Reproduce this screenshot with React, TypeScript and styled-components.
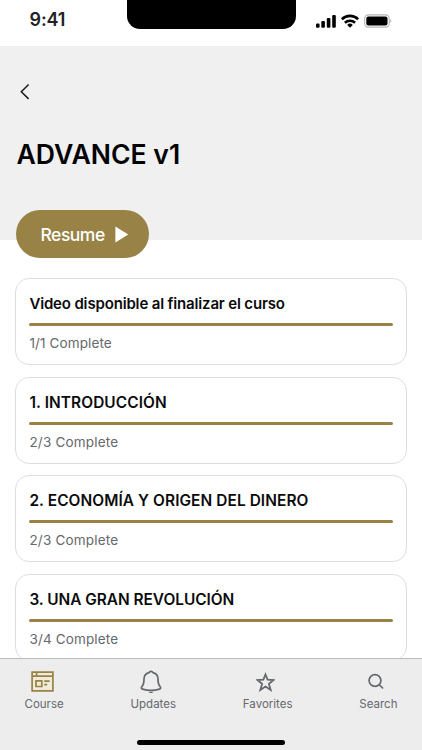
import React from "react";
import styled, { createGlobalStyle } from "styled-components";

const GOLD = "#988246";
const INK = "#0b0b0d";
const GREY = "#65686d";

const GlobalStyle = createGlobalStyle`
  *, *::before, *::after { box-sizing: border-box; }
  html, body { margin: 0; height: 100%; overflow: hidden; background: #fff; }
  #root { height: 100%; }
  button { border: 0; margin: 0; padding: 0; background: none; font: inherit; color: inherit; }
  svg { display: block; flex: none; }
`;

const Screen = styled.div`
  display: flex;
  flex-direction: column;
  width: 422px;
  height: 750px;
  overflow: hidden;
  background: #fff;
  color: ${INK};
  font-family: Inter, "Liberation Sans", sans-serif;
`;

const StatusBar = styled.div`
  flex: none;
  display: grid;
  grid-template-columns: 126.5px 169px 126.5px;
  align-items: start;
  height: 45.5px;
`;

const Clock = styled.span`
  padding: 9px 0 0 29.5px;
  font-size: 18px;
  line-height: 22px;
  font-weight: 600;
  letter-spacing: -0.1px;
  color: #222226;
`;

const Notch = styled.div`
  height: 29px;
  border-radius: 0 0 13px 13px;
  background: #000;
`;

const StatusIcons = styled.div`
  display: flex;
  align-items: center;
  padding: 13.5px 0 0 20.5px;
  gap: 5px;
`;

const Hero = styled.header`
  flex: none;
  display: flex;
  flex-direction: column;
  align-items: flex-start;
  height: 194px;
  padding: 37.5px 16px 0;
  background: #f0f0f0;
`;

const BackButton = styled.button`
  padding-left: 4px;
`;

const CourseTitle = styled.h1`
  margin: 38px 0 0 0.5px;
  font-size: 26.6px;
  line-height: 32px;
  font-weight: 600;
  color: #030304;
`;

const ResumeButton = styled.button`
  flex: none;
  display: flex;
  align-items: center;
  gap: 10.4px;
  width: 133px;
  height: 48px;
  margin-top: 40px;
  padding-left: 24.5px;
  border-radius: 24px;
  background: ${GOLD};
  color: #fff;
  font-size: 17.5px;
  font-weight: 500;
  letter-spacing: -0.5px;
`;

const Lessons = styled.main`
  flex: 1;
  min-height: 0;
  overflow: hidden;
  display: flex;
  flex-direction: column;
  gap: 11.5px;
  padding: 38.5px 15px 0;
`;

const LessonCard = styled.section`
  flex: none;
  height: 87px;
  padding: 15px 13.4px 0;
  border: 1px solid #dedede;
  border-radius: 14px;
`;

const LessonTitle = styled.h2<{ $size: number; $tracking: number }>`
  margin: 0;
  font-size: ${(p) => p.$size}px;
  line-height: 20px;
  font-weight: 600;
  white-space: nowrap;
  letter-spacing: ${(p) => p.$tracking}px;
`;

const Progress = styled.div`
  height: 3px;
  margin: 9px 0 7px;
  border-radius: 1.5px;
  background: ${GOLD};
`;

const Status = styled.p<{ $tracking: number }>`
  margin: 0;
  font-size: 13.5px;
  line-height: 20px;
  letter-spacing: ${(p) => p.$tracking}px;
  color: ${GREY};
`;

const TabBar = styled.nav`
  flex: none;
  display: flex;
  flex-direction: column;
  justify-content: space-between;
  height: 92px;
  padding-bottom: 5.5px;
  border-top: 1px solid #bcbcbc;
  background: #ededed;
`;

const Tabs = styled.div`
  display: flex;
  justify-content: space-between;
  padding: 10px 24.5px 0;
`;

const Tab = styled.button`
  display: flex;
  flex-direction: column;
  align-items: center;
  gap: 1.5px;
  color: ${GREY};
  font-size: 11.5px;
  line-height: 16px;
  white-space: nowrap;
`;

const TabIcon = styled.span`
  display: grid;
  place-items: center;
  height: 25px;
  margin-right: 4px;
`;

const HomeIndicator = styled.div`
  align-self: center;
  width: 148px;
  height: 5px;
  border-radius: 3px;
  background: #000;
`;

const SignalIcon = () => (
  <svg width="20" height="14" viewBox="0 0 20 14" fill="#000">
    <rect x="0" y="9.6" width="3.6" height="4.2" rx="1.1" />
    <rect x="5.3" y="7" width="3.6" height="6.8" rx="1.1" />
    <rect x="10.8" y="4" width="3.6" height="9.8" rx="1.1" />
    <rect x="16.2" y="1" width="3.6" height="12.8" rx="1.1" />
  </svg>
);

const WifiIcon = () => (
  <svg width="18" height="14" viewBox="0 0 18 14" fill="none" stroke="#000" strokeWidth="2.6">
    <path d="M.8 5.2a11.8 11.8 0 0 1 16.4 0" />
    <path d="M3.9 8.8a7.4 7.4 0 0 1 10.2 0" />
    <path d="M9 13.7l-2.8-2.8a4 4 0 0 1 5.6 0z" fill="#000" stroke="none" />
  </svg>
);

const BatteryIcon = () => (
  <svg width="28" height="14" viewBox="0 0 28 14">
    <rect x="0.6" y="0.9" width="24.6" height="12.2" rx="3.8" fill="none" stroke="#b5b5b5" strokeWidth="1.1" />
    <rect x="2.3" y="2.5" width="21.2" height="9" rx="2.1" fill="#000" />
    <path d="M26.4 5.2c1.3.5 1.3 3.1 0 3.6z" fill="#aaa" />
  </svg>
);

const ChevronIcon = () => (
  <svg width="10" height="17" viewBox="0 0 10 17" fill="none" stroke="#1b1b1e" strokeWidth="1.5">
    <path d="M8.6 1.5L1.3 8.7l7.3 7.2" />
  </svg>
);

const PlayIcon = () => (
  <svg width="14" height="17" viewBox="0 0 14 17" fill="#fff">
    <path d="M.4.5v16L13.2 8.5z" />
  </svg>
);

const CourseIcon = () => (
  <svg width="23" height="21" viewBox="0 0 23 21" fill="none" stroke={GOLD} strokeWidth="1.7">
    <path d="M1.1 1.2h20.8v18.6H1.1z" fill="#f0ebdb" />
    <path d="M1.1 5.1h20.8M5.6 1.2v3.9" />
    <path d="M5 9.9h5.8v5.6H5zM13.2 10.1h5.5M13.2 13.7h3" />
  </svg>
);

const BellIcon = () => (
  <svg width="22" height="24" viewBox="0 0 22 24" fill="none" stroke={GREY} strokeWidth="1.7" strokeLinejoin="round">
    <path d="M9 2.6a2.2 2.2 0 0 1 4 0c3.2.8 5 3.3 5 6.5 0 4.2.5 6 2.1 7.6.9.8.7 2-.6 2.4-5.4 1.7-11.6 1.7-17 0-1.3-.4-1.5-1.6-.6-2.4C3.5 15.1 4 13.3 4 9.1c0-3.2 1.8-5.7 5-6.5z" />
    <path d="M8.6 21.7h4.8c-.5 1.7-4.3 1.7-4.8 0z" fill={GREY} stroke="none" />
  </svg>
);

const StarIcon = () => (
  <svg width="19" height="20" viewBox="0 0 19 20" fill="none" stroke={GREY} strokeWidth="1.8">
    <path d="M9.5 2.5l2.1 5.2 6 .3-4.7 3.9 1.8 6.1-5.2-3.4-5.2 3.4 1.8-6.1L1.4 8l6-.3z" />
  </svg>
);

const SearchIcon = () => (
  <svg width="16" height="17" viewBox="0 0 16 17" fill="none" stroke={GREY} strokeWidth="1.7">
    <circle cx="7" cy="7.5" r="5.9" />
    <path d="M11.2 11.7l3.9 3.8" />
  </svg>
);

const lessons = [
  { title: "Video disponible al finalizar el curso", status: "1/1 Complete", size: 15, tracking: -0.16, statusTracking: 0.12 },
  { title: "1. INTRODUCCIÓN", status: "2/3 Complete", size: 15.4, tracking: 0.1, statusTracking: 0.2 },
  { title: "2. ECONOMÍA Y ORIGEN DEL DINERO", status: "2/3 Complete", size: 15.4, tracking: 0.09, statusTracking: 0.2 },
  { title: "3. UNA GRAN REVOLUCIÓN", status: "3/4 Complete", size: 15.4, tracking: -0.02, statusTracking: 0.15 },
];

const tabs = [
  { label: "Course", icon: <CourseIcon /> },
  { label: "Updates", icon: <BellIcon /> },
  { label: "Favorites", icon: <StarIcon /> },
  { label: "Search", icon: <SearchIcon /> },
];

export default function App() {
  return (
    <>
      <GlobalStyle />
      <Screen>
        <StatusBar>
          <Clock>9:41</Clock>
          <Notch />
          <StatusIcons>
            <SignalIcon />
            <WifiIcon />
            <BatteryIcon />
          </StatusIcons>
        </StatusBar>
        <Hero>
          <BackButton aria-label="Back">
            <ChevronIcon />
          </BackButton>
          <CourseTitle>ADVANCE v1</CourseTitle>
          <ResumeButton>
            Resume
            <PlayIcon />
          </ResumeButton>
        </Hero>
        <Lessons>
          {lessons.map((lesson) => (
            <LessonCard key={lesson.title}>
              <LessonTitle $size={lesson.size} $tracking={lesson.tracking}>
                {lesson.title}
              </LessonTitle>
              <Progress />
              <Status $tracking={lesson.statusTracking}>{lesson.status}</Status>
            </LessonCard>
          ))}
        </Lessons>
        <TabBar>
          <Tabs>
            {tabs.map((tab) => (
              <Tab key={tab.label}>
                <TabIcon>{tab.icon}</TabIcon>
                {tab.label}
              </Tab>
            ))}
          </Tabs>
          <HomeIndicator />
        </TabBar>
      </Screen>
    </>
  );
}
